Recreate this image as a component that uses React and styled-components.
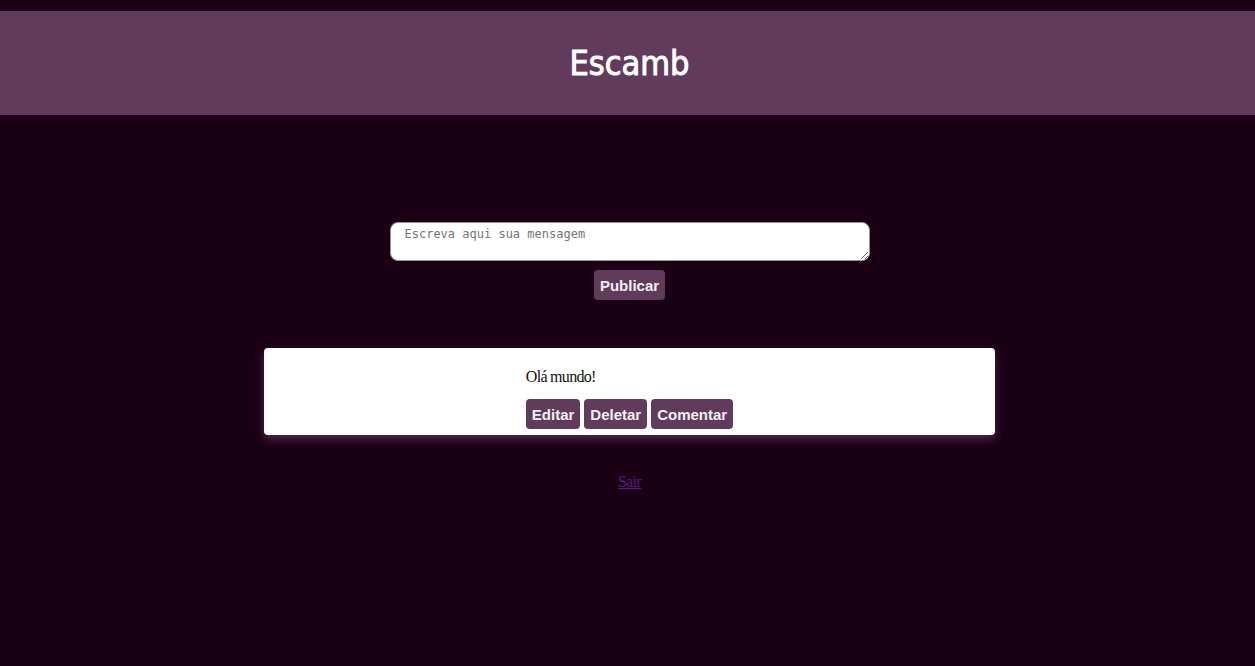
import React, { useState } from 'react';
import styled, { createGlobalStyle } from 'styled-components';

const GlobalStyle = createGlobalStyle`
  html, body {
    margin: 0;
    padding: 0;
    background-color: #1b0015;
  }
  body {
    font-family: "Liberation Serif", serif;
    font-size: 16px;
  }
`;

const Page = styled.div`
  min-height: 666px;
  box-sizing: border-box;
  padding-top: 11px;
  padding-left: 4px;
  display: flex;
  flex-direction: column;
  align-items: center;
`;

const Header = styled.header`
  width: calc(100% + 4px);
  margin-left: -4px;
  height: 104px;
  background-color: #613b5b;
  display: flex;
  justify-content: center;
  align-items: center;
  h1 {
    margin: 0 0 0 4px;
    color: white;
    font-family: "DejaVu Sans Condensed", "DejaVu Sans", sans-serif;
    font-weight: 400;
    font-size: 34px;
    -webkit-text-stroke: 0.9px white;
  }
`;

const PostForm = styled.form`
  margin-top: 107px;
  display: flex;
  flex-direction: column;
  align-items: center;
  gap: 9px;
`;

const MessageInput = styled.textarea`
  width: 480px;
  height: 39px;
  box-sizing: border-box;
  border: 1px solid #999;
  border-radius: 8px;
  padding: 4px 14px;
  font-family: "DejaVu Sans Mono", monospace;
  font-size: 12px;
  outline: none;
  ::placeholder {
    color: #777;
  }
`;

const Button = styled.button`
  background-color: #613b5b;
  color: #f4eef3;
  border: none;
  border-radius: 4px;
  height: 30px;
  padding: 0 6px;
  font-family: "Liberation Sans", Arial, sans-serif;
  font-weight: bold;
  font-size: 15px;
  cursor: pointer;
`;

const Feed = styled.section`
  margin-top: 48px;
  width: 731px;
  display: flex;
  flex-direction: column;
`;

const PostCard = styled.article`
  background-color: white;
  border-radius: 4px;
  box-shadow: 0 4px 10px rgba(120, 70, 110, 0.6);
  height: 87px;
  box-sizing: border-box;
  display: flex;
  justify-content: center;
`;

const PostBody = styled.div`
  padding-top: 20px;
  p {
    margin: 0 0 13px;
    color: #111;
    letter-spacing: -0.7px;
  }
`;

const Actions = styled.div`
  display: flex;
  gap: 4px;
`;

const LogoutLink = styled.a`
  margin-top: 38px;
  color: #551a8b;
  font-size: 16px;
  letter-spacing: -0.7px;
`;

const App = () => {
  const [message, setMessage] = useState('');

  return (
    <>
      <GlobalStyle />
      <Page>
        <Header>
          <h1>Escamb</h1>
        </Header>
        <PostForm onSubmit={e => e.preventDefault()}>
          <MessageInput
            placeholder="Escreva aqui sua mensagem"
            value={message}
            onChange={e => setMessage(e.target.value)}
          />
          <Button type="submit">Publicar</Button>
        </PostForm>
        <Feed>
          <PostCard>
            <PostBody>
              <p>Olá mundo!</p>
              <Actions>
                <Button>Editar</Button>
                <Button>Deletar</Button>
                <Button>Comentar</Button>
              </Actions>
            </PostBody>
          </PostCard>
        </Feed>
        <LogoutLink href="#">Sair</LogoutLink>
      </Page>
    </>
  );
};

export default App;
